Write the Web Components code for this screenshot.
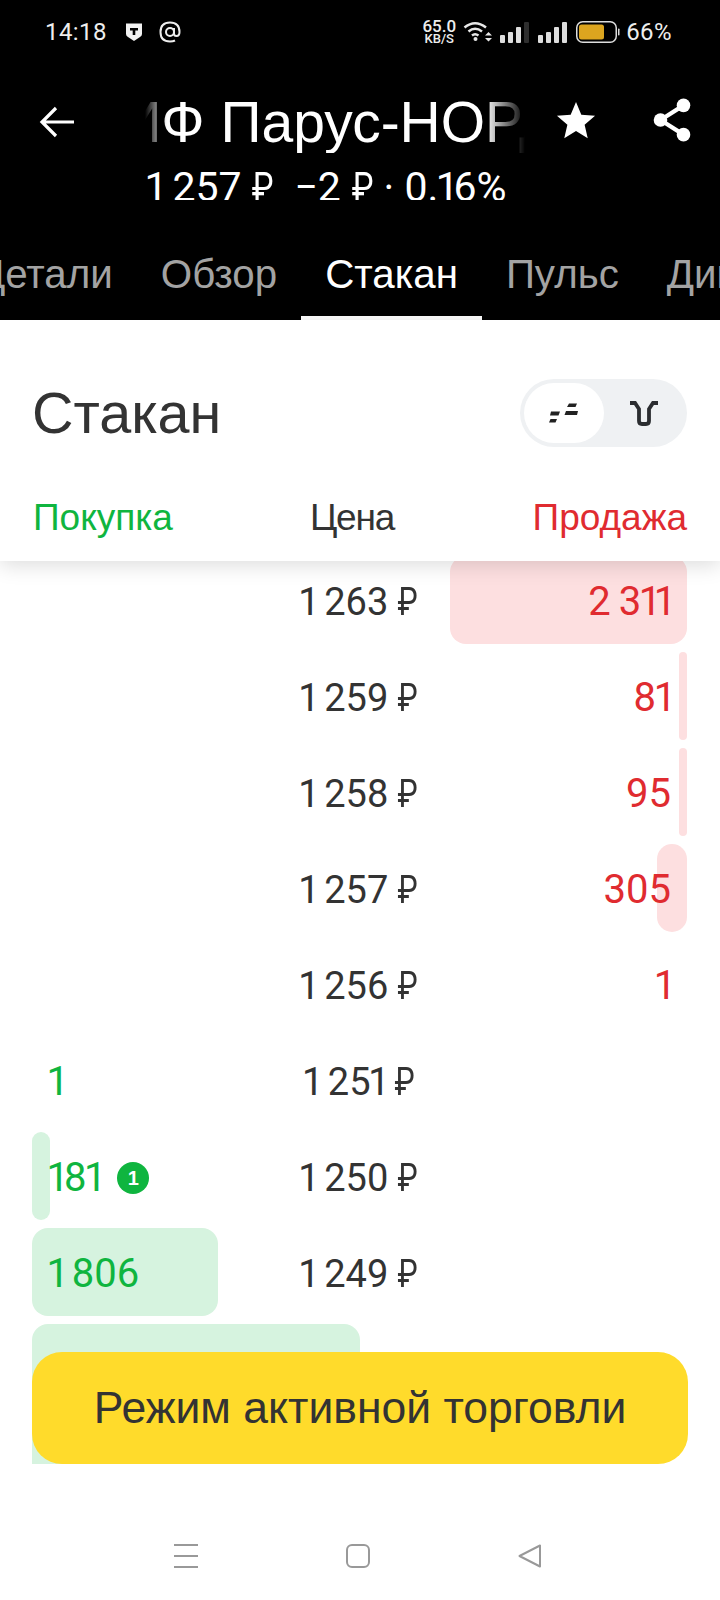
<!DOCTYPE html>
<html lang="ru"><head><meta charset="utf-8"><title>Стакан</title>
<style>
html,body{margin:0;padding:0;background:#fff}
body{width:720px;height:1600px;overflow:hidden;font-family:"Liberation Sans",Arial,sans-serif}
</style></head><body>
<app-screen></app-screen>
<script>
const def=(name,html,extra)=>{customElements.define(name,class extends HTMLElement{
  constructor(){super();this.attachShadow({mode:'open'}).innerHTML=html;}
  connectedCallback(){extra&&extra(this)}
})};
const NUM=`.num{font-family:Roboto,"Liberation Sans",sans-serif;word-spacing:-.05em}.n{letter-spacing:-.13em;margin-left:-.06em}.rb{display:inline-block;transform:scaleX(.8);margin:0 -.06em}`;
const num=t=>t.replace(/1/g,'<span class="n">1</span>').replace(/₽/g,'<span class="rb">₽</span>');
def('status-bar',`<style>
:host{display:flex;align-items:center;height:64px;padding:0 48px 0 45px;box-sizing:border-box;background:#000;color:#eee;font:24px Roboto,sans-serif;letter-spacing:.4px}
.l{display:flex;align-items:center;gap:15px}.r{margin-left:auto;display:flex;align-items:center}
.sp{text-align:center;letter-spacing:0;width:34px}.sp b{display:block;font-size:17px;line-height:13px;font-weight:500}.sp span{display:block;font-size:13px;line-height:11px;font-weight:500}
svg{display:block}
</style><div class="l"><span>14:18</span>
<svg width="18" height="20" viewBox="0 0 18 20" style="margin-left:3px"><path d="M1 1.500H17V12Q17 14 15 15L9 19 3 15Q1 14 1 12Z" fill="#f2f2f2"/><path d="M5 6H13V8.500H10.300V13H7.700V8.500H5Z" fill="#000"/></svg>
<svg width="22" height="22" viewBox="0 0 22 22" style="margin-left:1px" fill="none" stroke="#eee" stroke-width="2"><circle cx="11" cy="11" r="4"/><path d="M15 7V12.500Q15 15 17.500 15 20.500 15 20.500 11 20.500 1.500 11 1.500 1.500 1.500 1.500 11 1.500 20.500 11 20.500 14 20.500 16 19.500"/></svg></div>
<div class="r"><div class="sp"><b>65.0</b><span>KB/S</span></div>
<svg width="30" height="24" viewBox="0 0 30 24" style="margin-left:7px" fill="none" stroke="#e8e8e8" stroke-width="2.500"><path d="M1.500 7.500Q12 -1 23 7.500"/><path d="M5.500 11.500Q12 6 19 11.500"/><path d="M9 15.500Q12 13 15.500 15.500"/><circle cx="12.500" cy="19" r="2" fill="#e8e8e8" stroke="none"/><path d="M22 15.500H29L25.500 12ZM22 18H29L25.500 21.500Z" fill="#e8e8e8" stroke="none"/></svg>
<svg width="30" height="21" viewBox="0 0 30 21" style="margin-left:7px"><g fill="#ddd"><rect x="0" y="13" width="5" height="8" rx="1"/><rect x="8" y="10" width="5" height="11" rx="1"/><rect x="16" y="5" width="5" height="16" rx="1"/></g><rect x="24" y="0" width="5" height="21" rx="1" fill="#2e2e2e"/></svg>
<svg width="29" height="21" viewBox="0 0 29 21" style="margin-left:8px" fill="#ddd"><rect x="0" y="13" width="5" height="8" rx="1"/><rect x="8" y="10" width="5" height="11" rx="1"/><rect x="16" y="5" width="5" height="16" rx="1"/><rect x="24" y="0" width="5" height="21" rx="1"/></svg>
<svg width="44" height="22" viewBox="0 0 44 22" style="margin-left:9px"><rect x=".75" y=".75" width="39.500" height="20.500" rx="6" fill="none" stroke="#ddd" stroke-width="1.500"/><rect x="3" y="3.500" width="25" height="15" rx="2.500" fill="#dca51f"/><rect x="42" y="7.500" width="1.500" height="7" rx=".7" fill="#ddd"/></svg>
<span style="margin-left:6px">66%</span></div>`);
def('top-bar',`<style>
${NUM}
:host{display:block;background:#000;color:#fff;height:142px}
.main{display:flex;align-items:flex-start;height:142px}
.back{margin:39px 0 0 38px;flex:none}
.mid{width:380px;margin-left:69px;flex:none;overflow:hidden}
.t{margin-top:27px;height:62px;overflow:hidden;white-space:nowrap;font-size:57px;line-height:62px;
 -webkit-mask-image:linear-gradient(90deg,transparent 0,#000 22px,#000 340px,transparent 380px);mask-image:linear-gradient(90deg,transparent 0,#000 22px,#000 340px,transparent 380px)}
.t span{margin-left:-100px}
.s{height:47px;overflow:hidden;white-space:nowrap;font-size:41px;line-height:68px;padding-left:2px;word-spacing:0}
.star{margin:34px 0 0 29px;flex:none}.share{margin:33px 0 0 51px;flex:none}
</style><div class="main">
<svg class="back" width="38" height="38" viewBox="0 0 38 38" fill="none" stroke="#fff" stroke-width="3.200"><path d="M36 19H4M18 5L4 19 18 33"/></svg>
<div class="mid"><div class="t"><span>ЗПИФ Парус-НОРД</span></div><div class="s num" id="s"></div></div>
<svg class="star" width="44" height="44" viewBox="0 0 24 24" fill="#fff"><path d="M12 2.200L14.900 9.100 22.400 9.700 16.700 14.600 18.400 21.900 12 18 5.600 21.900 7.300 14.600 1.600 9.700 9.100 9.100Z"/></svg>
<svg class="share" width="46" height="46" viewBox="0 0 44 44" fill="#fff"><circle cx="33" cy="8" r="6.500"/><circle cx="33" cy="36" r="6.500"/><circle cx="11" cy="22" r="6.500"/><path d="M11 22L33 8M11 22L33 36" stroke="#fff" stroke-width="4"/></svg>
</div>`,el=>{el.shadowRoot.getElementById('s').innerHTML=num(el.getAttribute('sub'))});
def('tab-strip',`<style>
:host{display:flex;background:#000;height:114px;overflow:hidden;box-sizing:border-box;padding-top:44px}
.in{display:flex;margin-left:-46px}
::slotted(*){flex:none}
</style><div class="in"><slot></slot></div>`);
def('tab-item',`<style>
:host{display:block;box-sizing:border-box;height:70px;padding:0 24px;font-size:40.300px;line-height:50px;white-space:nowrap;color:#a3a3a3;border-bottom:4px solid transparent}
:host([active]){color:#fff;border-bottom-color:#fff}
</style><slot></slot>`);
def('view-toggle',`<style>
:host{display:flex;width:167px;height:68px;box-sizing:border-box;padding:4px;border-radius:34px;background:#eff1f3}
div{flex:none;display:flex;align-items:center;justify-content:center;height:60px}
.a{width:80px;background:#fff;border-radius:30px}.b{width:79px}
</style><div class="a"><svg width="30" height="22" viewBox="0 0 30 22" fill="#222"><path d="M2 9.500H11L9.500 13.500H1ZM1.500 17H8L6.500 20.500H0ZM20 1.500H28L26.500 5H18ZM17 9H29L28 13H15.500Z"/></svg></div>
<div class="b"><svg width="30" height="26" viewBox="0 0 30 26" fill="none" stroke="#2b2d30" stroke-width="3.800"><path d="M1 3H6L10 9V21Q10 24 13 24H17Q20 24 20 21V9L24 3H29"/></svg></div>`);
def('book-head',`<style>
:host{display:block;background:#fff;color:#333;position:relative;z-index:2;height:241px;box-shadow:0 4px 20px rgba(0,0,0,.14)}
.top{display:flex;align-items:center;justify-content:space-between;padding:59px 33px 0 32px;height:68px}
h1{margin:0;font-weight:400;font-size:57.500px;line-height:68px;color:#333}
.cols{display:grid;grid-template-columns:1fr auto 1fr;padding:0 33px 0 33px;margin-top:51px;font-size:37px;line-height:40px}
.b{color:#0fb53f}.c{color:#333;letter-spacing:-1.200px;padding-right:16px}.s{color:#e02b30;text-align:right}
</style><div class="top"><h1>Стакан</h1><view-toggle></view-toggle></div>
<div class="cols"><span class="b">Покупка</span><span class="c">Цена</span><span class="s">Продажа</span></div>`);
def('book-row',`<style>
${NUM}
:host{display:grid;grid-template-columns:repeat(3,1fr);height:96px;align-items:center;font-size:40px;color:#333}
.bar{grid-area:1/1/2/4;height:88px;border-radius:16px;width:var(--w,0);justify-self:var(--js,start)}
:host([side=buy]) .bar{background:#d6f3df}:host([side=sell]) .bar{background:#fddfe0}
.q,.p,.sq{padding-top:4px;white-space:nowrap;line-height:44px}
.q{grid-area:1/1;display:flex;align-items:center;gap:16px;padding-left:17px;color:#0fb53f}
.p{grid-area:1/2;text-align:center;font-size:38px;word-spacing:0}
.sq{grid-area:1/3;text-align:right;padding-right:16px;color:#e02b30}
</style><div class="bar"></div><div class="q"><span class="bq num"></span><slot name="badge"></slot></div><div class="p num"></div><div class="sq num"></div>`,
(el)=>{const r=el.shadowRoot;const side=el.getAttribute('side');
 r.querySelector('.p').innerHTML=num(el.getAttribute('price'));
 const qty=num(el.getAttribute('qty')||'');
 if(side==='buy')r.querySelector('.bq').innerHTML=qty;else r.querySelector('.sq').innerHTML=qty;
 el.style.setProperty('--w',(el.getAttribute('bar')||0)+'px');
 el.style.setProperty('--js',side==='buy'?'start':'end');});
def('count-badge',`<style>
:host{display:flex;width:32px;height:32px;border-radius:50%;background:#0fb53f;color:#fff;align-items:center;justify-content:center;font:700 20px "Liberation Sans",sans-serif}
</style><slot></slot>`);
def('book-list',`<style>
:host{display:block;height:903px;overflow:hidden;padding:0 33px 0 32px;background:#fff}
.in{margin-top:-9px}
</style><div class="in"><slot></slot></div>`);
def('active-button',`<style>
:host{position:absolute;left:32px;top:1352px;width:656px;height:112px;z-index:3;border-radius:30px;background:#ffdb2b;color:#333;display:flex;align-items:center;justify-content:center;font-size:44.500px}
</style><slot></slot>`);
def('nav-bar',`<style>
:host{display:flex;height:136px;background:#fff;box-sizing:border-box;padding:80px 0 0 174px;gap:148px}
svg{display:block;flex:none}
</style>
<svg width="24" height="24" viewBox="0 0 24 24" stroke="#999" stroke-width="2" fill="none"><path d="M0 1H24M0 12H24M0 23H24"/></svg>
<svg width="24" height="24" viewBox="0 0 24 24" stroke="#999" stroke-width="2" fill="none"><rect x="1" y="1" width="22" height="22" rx="5"/></svg>
<svg width="24" height="24" viewBox="0 0 24 24" stroke="#999" stroke-width="2" fill="none" stroke-linejoin="round"><path d="M22 1.500V22.500L1.500 12Z"/></svg>`);
def('app-screen',`<style>
:host{display:block;width:720px;height:1600px;position:relative;overflow:hidden;font-family:"Liberation Sans",Arial,sans-serif}
</style>
<status-bar></status-bar>
<top-bar sub="1 257 ₽ &nbsp;−2 ₽ · 0.16%"></top-bar>
<tab-strip><tab-item>Детали</tab-item><tab-item>Обзор</tab-item><tab-item active>Стакан</tab-item><tab-item>Пульс</tab-item><tab-item>Дивиденды</tab-item></tab-strip>
<book-head></book-head>
<book-list>
<book-row side="sell" price="1 263 ₽" qty="2 311" bar="237"></book-row>
<book-row side="sell" price="1 259 ₽" qty="81" bar="8"></book-row>
<book-row side="sell" price="1 258 ₽" qty="95" bar="8"></book-row>
<book-row side="sell" price="1 257 ₽" qty="305" bar="30"></book-row>
<book-row side="sell" price="1 256 ₽" qty="1" bar="0"></book-row>
<book-row side="buy" price="1 251 ₽" qty="1" bar="0"></book-row>
<book-row side="buy" price="1 250 ₽" qty="181" bar="18"><count-badge slot="badge">1</count-badge></book-row>
<book-row side="buy" price="1 249 ₽" qty="1 806" bar="186"></book-row>
<book-row side="buy" price="1 248 ₽" qty="3 210" bar="328"></book-row>
<book-row side="buy" price="1 247 ₽" qty="2 500" bar="260"></book-row>
</book-list>
<active-button>Режим активной торговли</active-button>
<nav-bar></nav-bar>`);
</script>
</body></html>
